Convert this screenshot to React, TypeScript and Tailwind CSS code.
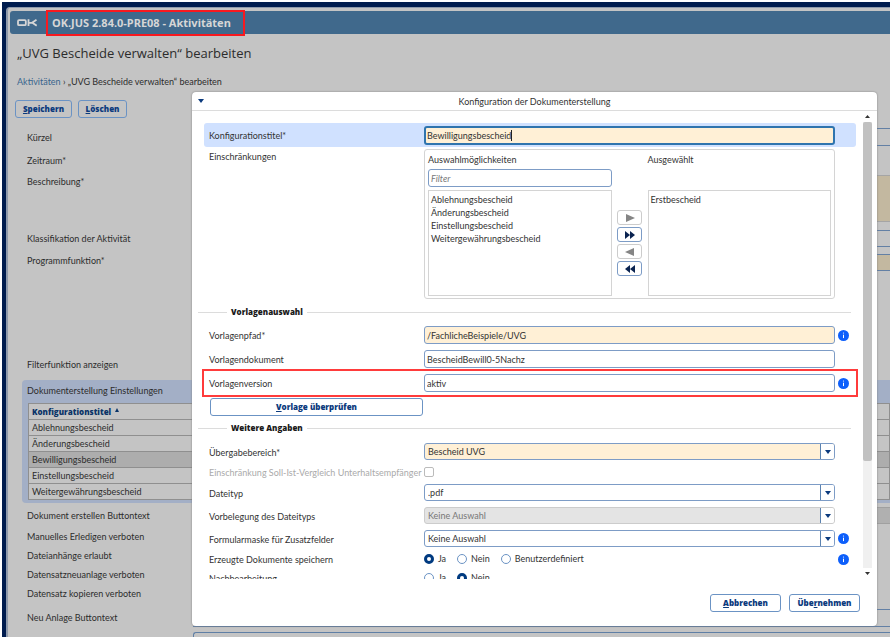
import type { ReactNode } from "react";

const ROW = "flex items-center pl-[5px]";
const LABEL = "w-[215px] shrink-0 pt-[2px] whitespace-nowrap";
const INPUT =
  "h-[18px] w-full rounded-[3px] border border-[#7d9cc6] px-[2px] pt-px text-[#333] outline-none";
const BUTTON =
  "h-[18px] rounded-[3px] border border-[#6b93c4] font-['Open_Sans',sans-serif] text-[8px] font-extrabold text-[#0b3a7d]";

const bescheide = [
  "Ablehnungsbescheid",
  "Änderungsbescheid",
  "Bewilligungsbescheid",
  "Einstellungsbescheid",
  "Weitergewährungsbescheid",
];

function Info() {
  return (
    <button type="button" aria-label="Information" className="ml-[3px] h-[11px] w-[11px]">
      <svg viewBox="0 0 11 11" className="block h-full w-full">
        <circle cx="5.5" cy="5.5" r="5.5" fill="#0d5ffb" />
        <path d="M5.5 4.7v3.4" stroke="#fff" strokeWidth="1" />
        <circle cx="5.5" cy="3" r="0.6" fill="#fff" />
      </svg>
    </button>
  );
}

function Row({
  id,
  label,
  height = "h-6",
  info,
  children,
}: {
  id: string;
  label: string;
  height?: string;
  info?: boolean;
  children: ReactNode;
}) {
  return (
    <div className={`${ROW} ${height}`}>
      <label htmlFor={id} className={LABEL}>{label}</label>
      <div className="min-w-0 flex-1">{children}</div>
      <div className="flex w-[21px] shrink-0 items-center">{info && <Info />}</div>
    </div>
  );
}

function Auswahl({ id, value, look = "border-[#7d9cc6] bg-white", disabled }: {
  id: string;
  value: string;
  look?: string;
  disabled?: boolean;
}) {
  return (
    <div className={`flex h-[17px] overflow-hidden rounded-[3px] border ${look}`}>
      <div className="relative flex-1">
        <select
          id={id}
          disabled={disabled}
          className="block h-full w-full appearance-none pr-[16px] pl-[3px] text-[#333] outline-none disabled:text-[#777]"
        >
          <option>{value}</option>
        </select>
        <span className="pointer-events-none absolute inset-y-0 right-0 flex w-[14px] items-center justify-center border-l border-[#5b82b0] bg-white">
          <svg viewBox="0 0 6 4" className="h-[4px] w-[6px]">
            <path d="M0 0h6L3 4z" fill="#0b3a7d" />
          </svg>
        </span>
      </div>
    </div>
  );
}

function Radios({ name, options, checked, firstId }: {
  name: string;
  options: string[];
  checked: string;
  firstId: string;
}) {
  return (
    <div className="flex items-center gap-[11px]">
      {options.map((o, i) => (
        <label key={o} className="flex items-center gap-[4px]">
          <input
            id={i === 0 ? firstId : undefined}
            type="radio"
            name={name}
            defaultChecked={o === checked}
            className="h-[10px] w-[10px] appearance-none rounded-full border border-[#6b93c4] bg-white checked:border-[3px] checked:border-[#003a80]"
          />
          {o}
        </label>
      ))}
    </div>
  );
}

function Abschnitt({ children }: { children: ReactNode }) {
  return (
    <h3 className="-ml-[6px] mr-[5px] flex h-[18px] items-center gap-[4px] font-['Open_Sans',sans-serif] text-[8px] font-extrabold text-[#1a1a1a]">
      <span className="h-px w-[29px] bg-[#dcdcdc]" />
      {children}
      <span className="h-px flex-1 bg-[#dcdcdc]" />
    </h3>
  );
}

function Pfeil({ label, double, left, disabled }: {
  label: string;
  double?: boolean;
  left?: boolean;
  disabled?: boolean;
}) {
  return (
    <button
      type="button"
      aria-label={label}
      disabled={disabled}
      className="flex h-[15px] w-[25px] items-center justify-center rounded-[3px] border border-[#7d9cc6] text-[#0a2350] disabled:border-[#ccc] disabled:text-[#858585]"
    >
      <svg viewBox="0 0 10 8" className={left ? "h-[8px] w-[10px] -scale-x-100" : "h-[8px] w-[10px]"}>
        <path d={double ? "M0 0l5 4-5 4zM5 0l5 4-5 4z" : "M1 0l9 4-9 4z"} fill="currentColor" />
      </svg>
    </button>
  );
}

function Feld({ id, label, height = "h-[19px]", field, align = "items-center" }: {
  id: string;
  label: string;
  height?: string;
  field?: string;
  align?: string;
}) {
  return (
    <div className={`flex pl-[19px] ${align} ${height}`}>
      <label htmlFor={id} className="w-[166px] shrink-0 pt-px whitespace-nowrap">{label}</label>
      {field && <input id={id} className={`min-w-0 flex-1 border-y ${field}`} />}
    </div>
  );
}

function Hintergrund() {
  return (
    <main className="text-[#2c2c2c]">
      <h1 className="mt-[8px] pl-[9px] font-['Open_Sans',sans-serif] text-[13px] leading-[22px]">
        „UVG Bescheide verwalten“ bearbeiten
      </h1>
      <nav className="mt-[11px] pl-[9px] leading-[14px]">
        <a href="#" className="text-[#39658d]">Aktivitäten</a> › „UVG Bescheide verwalten“ bearbeiten
      </nav>
      <div className="mt-[11px] flex gap-[6px] pl-[7px]">
        <button className={`${BUTTON} w-[57px]`}><u>S</u>peichern</button>
        <button className={`${BUTTON} w-[49px]`}><u>L</u>öschen</button>
      </div>
      <div className="mt-[7px]">
        <Feld id="kuerzel" label="Kürzel" height="h-6" field="h-[18px] border-[#6380a5]" />
        <Feld id="zeitraum" label="Zeitraum*" height="h-[23px]" />
        <Feld id="beschreibung" label="Beschreibung*" height="h-[54px]" align="items-start pt-[3px]" field="h-[47px] border-[#a5a5a5] bg-[#c3b8a0]" />
        <Feld id="klasse" label="Klassifikation der Aktivität" height="h-6" field="h-[17px] border-[#6380a5]" />
        <Feld id="programm" label="Programmfunktion*" height="h-[103px]" align="items-start pt-[4px]" field="h-[17px] border-[#6380a5] bg-[#c3b8a0]" />
        <Feld id="filterfn" label="Filterfunktion anzeigen" height="h-[22px]" />
      </div>
      <section className="mt-[5px] ml-[14px] rounded-l-[4px] bg-[#a3afc6] pb-[3px] pl-[6px]">
        <h2 className="-ml-[1px] h-[23px] leading-[22px]">Dokumenterstellung Einstellungen</h2>
        <table className="w-full border-collapse bg-[#c4c4c4]">
          <thead>
            <tr>
              <th className="h-4 border border-[#8f8f8f] p-0 pl-[3px] text-left font-['Open_Sans',sans-serif] text-[8px] leading-[15px] font-extrabold text-[#0b3468]">
                Konfigurationstitel <span className="ml-[2px] inline-block h-0 w-0 border-x-2 border-b-4 border-x-transparent border-b-[#0b3468] align-[3px]" />
              </th>
            </tr>
          </thead>
          <tbody>
            {bescheide.map((b) => (
              <tr key={b} className={b === "Bewilligungsbescheid" ? "bg-[#adadad]" : ""}>
                <td className="border border-[#8f8f8f] p-0 pl-[3px] leading-[15px]">{b}</td>
              </tr>
            ))}
          </tbody>
        </table>
      </section>
      <div className="mt-px">
        <Feld id="btn" label="Dokument erstellen Buttontext" height="h-[23px]" field="h-[17px] border-[#a0a0a0] bg-[#b0b0b0]" />
        <Feld id="erledigen" label="Manuelles Erledigen verboten" />
        <Feld id="anhaenge" label="Dateianhänge erlaubt" />
        <Feld id="neuanlage" label="Datensatzneuanlage verboten" />
        <Feld id="kopieren" label="Datensatz kopieren verboten" />
        <Feld id="neubtn" label="Neu Anlage Buttontext" height="h-[29px]" field="h-[18px] border-[#6380a5]" />
        <Feld id="weiteres" label="" height="h-[18px]" field="h-[18px] rounded-l-[3px] border-l border-[#5f7fa5]" />
      </div>
    </main>
  );
}

function Dialog() {
  return (
    <div
      role="dialog"
      aria-labelledby="dialog-titel"
      className="absolute top-[92px] right-[13px] bottom-[11px] left-[192px] flex flex-col rounded-[4px] bg-white text-[#333] shadow-[0_0_2px_#777]"
    >
      <header className="flex h-[19px] shrink-0 items-center border-b border-[#dcdcdc] pr-[14px] pl-[6px]">
        <button type="button" aria-label="Einklappen" className="w-[8px]">
          <svg viewBox="0 0 6 4" className="h-[4px] w-[6px]">
            <path d="M0 0h6L3 4z" fill="#0b3a7d" />
          </svg>
        </button>
        <h2 id="dialog-titel" className="flex-1 pt-[2px] text-center">Konfiguration der Dokumenterstellung</h2>
      </header>

      <div className="flex min-h-0 flex-1">
        <form className="min-w-0 flex-1 overflow-hidden pt-[12px] pr-[2px] pl-[12px]">
          <div className="rounded-[3px] bg-[#d0e1ff]">
            <Row id="titel" label="Konfigurationstitel*">
              <div className="relative">
                <input
                  id="titel"
                  defaultValue="Bewilligungsbescheid"
                  className="block h-[19px] w-full rounded-[3px] border-2 border-[#2f74ae] bg-[#fff0d6] px-px pt-px text-[#333] outline-none"
                />
                <span className="pointer-events-none absolute top-[4px] left-[3px] h-[11px] border-r border-[#222]" aria-hidden="true">
                  <span className="invisible">Bewilligungsbescheid</span>
                </span>
              </div>
            </Row>
          </div>

          <div className="flex pt-[2px] pr-[21px] pl-[5px]">
            <span className={LABEL}>Einschränkungen</span>
            <fieldset className="flex h-[150px] min-w-0 flex-1 rounded-[3px] border border-[#d4d4d4] px-[3px] pb-[2px]">
              <div className="flex min-w-0 flex-1 flex-col">
                <label htmlFor="moeglich" className="h-[19px] leading-[19px]">Auswahlmöglichkeiten</label>
                <input aria-label="Filter" placeholder="Filter" className={`${INPUT} placeholder:text-[#777] placeholder:italic`} />
                <select id="moeglich" multiple className="mt-[3px] min-h-0 w-full flex-1 overflow-hidden border border-[#d4d4d4] py-[3px] outline-none">
                  {bescheide.filter((b) => b !== "Bewilligungsbescheid").map((b) => (
                    <option key={b} className="h-[13px] min-h-0 p-0 pl-[2px] leading-[13px]">{b}</option>
                  ))}
                </select>
              </div>
              <div className="flex w-[36px] shrink-0 flex-col items-center gap-[2px] pt-[60px]">
                <Pfeil label="Hinzufügen" disabled />
                <Pfeil label="Alle hinzufügen" double />
                <Pfeil label="Entfernen" left disabled />
                <Pfeil label="Alle entfernen" left double />
              </div>
              <div className="flex min-w-0 flex-1 flex-col">
                <label htmlFor="gewaehlt" className="mb-[21px] h-[19px] leading-[19px]">Ausgewählt</label>
                <select id="gewaehlt" multiple className="min-h-0 w-full flex-1 overflow-hidden border border-[#d4d4d4] py-[3px] outline-none">
                  <option className="h-[13px] min-h-0 p-0 pl-[2px] leading-[13px]">Erstbescheid</option>
                </select>
              </div>
            </fieldset>
          </div>

          <div className="pt-[4px] pb-[2px]">
            <Abschnitt>Vorlagenauswahl</Abschnitt>
          </div>
          <Row id="pfad" label="Vorlagenpfad*" info>
            <input id="pfad" defaultValue="/FachlicheBeispiele/UVG" className={`${INPUT} block bg-[#fff0d6]`} />
          </Row>
          <Row id="dokument" label="Vorlagendokument">
            <input id="dokument" defaultValue="BescheidBewill0-5Nachz" className={`${INPUT} block`} />
          </Row>
          <div className="relative">
            <Row id="version" label="Vorlagenversion" info>
              <input id="version" defaultValue="aktiv" className={`${INPUT} block`} />
            </Row>
            <span className="pointer-events-none absolute -inset-x-[2px] -inset-y-[2px] border-2 border-[#ff3b3b]" />
          </div>
          <button type="button" className={`${BUTTON} mt-[3px] ml-[6px] block w-[213px]`}><u>V</u>orlage überprüfen</button>

          <div className="pt-[3px] pb-[3px]">
            <Abschnitt>Weitere Angaben</Abschnitt>
          </div>
          <Row id="bereich" label="Übergabebereich*" height="h-[23px]">
            <Auswahl id="bereich" value="Bescheid UVG" look="border-[#7d9cc6] bg-[#fff0d6]" />
          </Row>
          <div className={`${ROW} h-[18px] text-[#aaa]`}>
            <label htmlFor="sollist" className={LABEL}>Einschränkung Soll-Ist-Vergleich Unterhaltsempfänger</label>
            <input id="sollist" type="checkbox" disabled className="h-[10px] w-[10px] appearance-none rounded-[2px] border border-[#bbb]" />
          </div>
          <Row id="typ" label="Dateityp" height="h-[23px]">
            <Auswahl id="typ" value=".pdf" />
          </Row>
          <Row id="vorbelegung" label="Vorbelegung des Dateityps" height="h-[23px]">
            <Auswahl id="vorbelegung" value="Keine Auswahl" look="border-[#ccc] bg-[#e4e4e4]" disabled />
          </Row>
          <Row id="maske" label="Formularmaske für Zusatzfelder" height="h-[23px]" info>
            <Auswahl id="maske" value="Keine Auswahl" />
          </Row>
          <Row id="speichern" label="Erzeugte Dokumente speichern" height="h-[18px]" info>
            <Radios name="speichern" firstId="speichern" options={["Ja", "Nein", "Benutzerdefiniert"]} checked="Ja" />
          </Row>
          <Row id="nachbearbeitung" label="Nachbearbeitung" height="h-[19px]">
            <Radios name="nachbearbeitung" firstId="nachbearbeitung" options={["Ja", "Nein"]} checked="Nein" />
          </Row>
        </form>

        <div className="mr-[5px] ml-[5px] flex w-[9px] flex-col items-center" aria-hidden="true">
          <svg viewBox="0 0 5 3" className="my-[4px] h-[3px] w-[5px]">
            <path d="M0 3h5L2.500 0z" fill="#333" />
          </svg>
          <div className="flex w-full flex-1 flex-col bg-[#f0f0f0]">
            <div className="h-[76%] w-full rounded-[2px] bg-[#c1c1c1]" />
          </div>
          <svg viewBox="0 0 5 3" className="my-[4px] h-[3px] w-[5px]">
            <path d="M0 0h5L2.500 3z" fill="#333" />
          </svg>
        </div>
      </div>

      <footer className="flex shrink-0 justify-end gap-[8px] pt-[15px] pr-[17px] pb-[14px]">
        <button type="button" className={`${BUTTON} w-[71px]`}><u>A</u>bbrechen</button>
        <button type="button" className={`${BUTTON} w-[71px]`}>Übe<u>r</u>nehmen</button>
      </footer>
    </div>
  );
}

export default function App() {
  return (
    <div className="relative h-screen overflow-hidden bg-white pt-[2px] pl-[2px] font-['Lato','Open_Sans',sans-serif] text-[9px] leading-[12px]">
      <div className="h-full bg-[#001c4e] pt-[5px] pl-[4px]">
        <div className="h-full rounded-tl-[4px] border-t border-l-2 border-[#8f9aab] bg-[#c4c4c4]">
          <header className="mt-[3px] ml-[2px] flex h-[23px] items-center rounded-l-[3px] bg-[#40698c] pl-[7px] text-[#d6d6d6]">
            <svg viewBox="0 0 20 8" className="h-[8px] w-[20px]" fill="none" stroke="currentColor" strokeWidth="1.800">
              <rect x="1" y="1.200" width="7.800" height="5" rx="1" />
              <path d="M11.500 0.300v6.800M19.500 0.800l-4.500 3H12M15 3.600l4.700 3.100" />
            </svg>
            <div className="relative ml-[15px] font-['Noto_Sans',sans-serif] text-[11px] font-bold">
              OK.JUS 2.84.0-PRE08 - Aktivitäten
              <span className="pointer-events-none absolute -inset-y-[7px] -right-[14px] -left-[6px] border-2 border-[#f8191f]" />
            </div>
          </header>
          <Hintergrund />
        </div>
      </div>
      <Dialog />
    </div>
  );
}
